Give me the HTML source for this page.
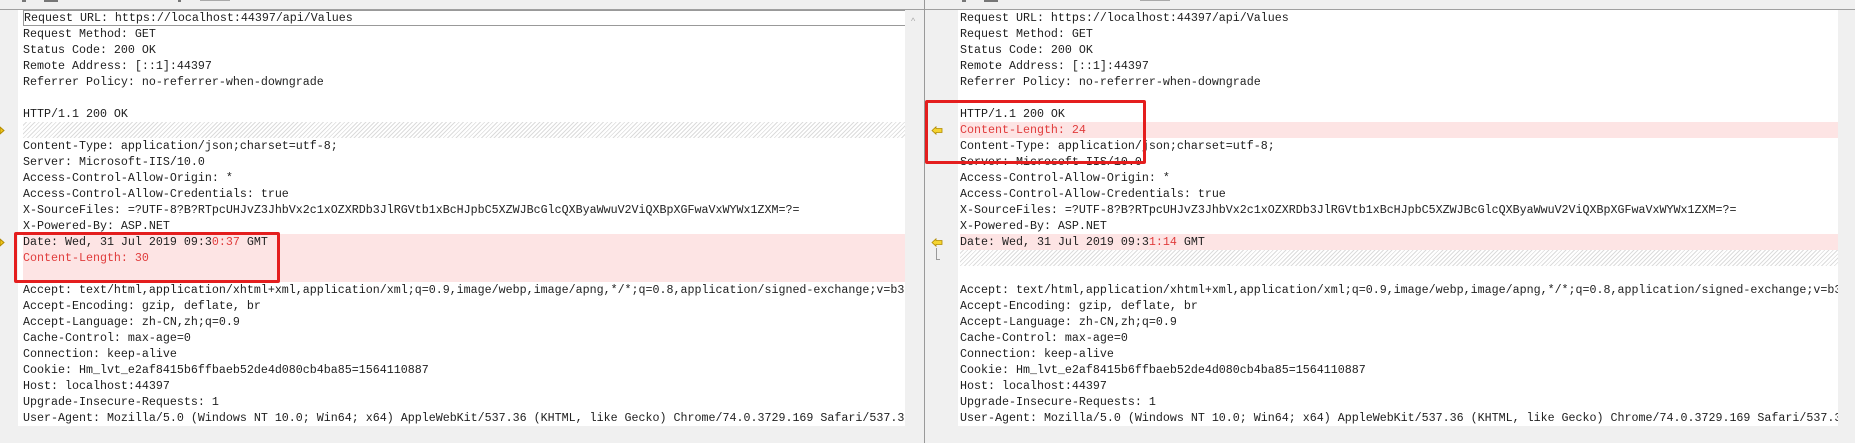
<!DOCTYPE html>
<html><head><meta charset="utf-8"><style>
*{margin:0;padding:0;box-sizing:border-box}
body{width:1855px;height:443px;overflow:hidden;background:#f0f0f0;position:relative;font-family:"Liberation Mono",monospace;font-size:11.67px;color:#1e1e1e}
.pane{position:absolute;top:10px;height:416px;background:#fff;overflow:hidden}
.l{position:absolute;left:0;height:16px;line-height:16px;white-space:pre;width:100%}
.pk{background:#fde4e4}
.r{color:#e03c3c}
.h{background:repeating-linear-gradient(135deg,#fff 0 2px,#dcdcdc 2px 3px)}
.box{position:absolute;border:3px solid #e41e1e;border-radius:2px}
.arr{position:absolute;width:12px;height:9px}
.top{position:absolute;top:0;height:2px;background:#777}
</style></head><body>
<div style="position:absolute;left:0;top:9px;width:1855px;height:1px;background:#a0a0a0"></div>
<div class="top" style="left:22px;width:4px"></div>
<div class="top" style="left:44px;width:14px"></div>
<div class="top" style="left:178px;width:3px"></div>
<div class="top" style="left:200px;width:30px;background:#aaa;height:1px"></div>
<div class="top" style="left:962px;width:4px"></div>
<div class="top" style="left:984px;width:14px"></div>
<div class="top" style="left:1140px;width:30px;background:#aaa;height:1px"></div>

<div style="position:absolute;left:0;top:10px;width:18px;height:416px;background:#f0f0f0"></div>
<div class="pane" style="left:18px;width:887px;">
<div style="position:relative;left:5px;width:882px;height:416px">
<div class="l" style="top:0;border:1px solid #999;border-right:none;height:16px;width:882px;line-height:14px">Request URL: https://localhost:44397/api/Values</div>
<div class="l" style="top:16px">Request Method: GET</div>
<div class="l" style="top:32px">Status Code: 200 OK</div>
<div class="l" style="top:48px">Remote Address: [::1]:44397</div>
<div class="l" style="top:64px">Referrer Policy: no-referrer-when-downgrade</div>
<div class="l" style="top:96px">HTTP/1.1 200 OK</div>
<div class="l h" style="top:112px"></div>
<div class="l" style="top:128px">Content-Type: application/json;charset=utf-8;</div>
<div class="l" style="top:144px">Server: Microsoft-IIS/10.0</div>
<div class="l" style="top:160px">Access-Control-Allow-Origin: *</div>
<div class="l" style="top:176px">Access-Control-Allow-Credentials: true</div>
<div class="l" style="top:192px">X-SourceFiles: =?UTF-8?B?RTpcUHJvZ3JhbVx2c1xOZXRDb3JlRGVtb1xBcHJpbC5XZWJBcGlcQXByaWwuV2ViQXBpXGFwaVxWYWx1ZXM=?=</div>
<div class="l" style="top:208px">X-Powered-By: ASP.NET</div>
<div class="l pk" style="top:224px">Date: Wed, 31 Jul 2019 09:3<span class="r">0:37</span> GMT</div>
<div class="l pk r" style="top:240px">Content-Length: 30</div>
<div class="l pk" style="top:256px"></div>
<div class="l" style="top:272px">Accept: text/html,application/xhtml+xml,application/xml;q=0.9,image/webp,image/apng,*/*;q=0.8,application/signed-exchange;v=b3</div>
<div class="l" style="top:288px">Accept-Encoding: gzip, deflate, br</div>
<div class="l" style="top:304px">Accept-Language: zh-CN,zh;q=0.9</div>
<div class="l" style="top:320px">Cache-Control: max-age=0</div>
<div class="l" style="top:336px">Connection: keep-alive</div>
<div class="l" style="top:352px">Cookie: Hm_lvt_e2af8415b6ffbaeb52de4d080cb4ba85=1564110887</div>
<div class="l" style="top:368px">Host: localhost:44397</div>
<div class="l" style="top:384px">Upgrade-Insecure-Requests: 1</div>
<div class="l" style="top:400px">User-Agent: Mozilla/5.0 (Windows NT 10.0; Win64; x64) AppleWebKit/537.36 (KHTML, like Gecko) Chrome/74.0.3729.169 Safari/537.36</div>
</div></div>
<svg class="arr" style="left:0;top:126px" viewBox="0 0 12 9"><path d="M0 1 L4 4.5 L0 8 Z" fill="#f0c419" stroke="#b08a00" stroke-width="1"/></svg>
<svg class="arr" style="left:0;top:238px" viewBox="0 0 12 9"><path d="M0 1 L4 4.5 L0 8 Z" fill="#f0c419" stroke="#b08a00" stroke-width="1"/></svg>
<div class="box" style="left:14px;top:232px;width:266px;height:51px"></div>
<div style="position:absolute;left:905px;top:10px;width:19px;height:433px;background:#f0f0f0"></div>
<div style="position:absolute;left:911px;top:16px;font-size:9px;color:#aaa;font-family:'Liberation Sans',sans-serif">^</div>
<div style="position:absolute;left:924px;top:0;width:1px;height:443px;background:#999"></div>

<div style="position:absolute;left:925px;top:10px;width:33px;height:416px;background:#f0f0f0"></div>
<div class="pane" style="left:958px;width:880px;">
<div style="position:relative;left:2px;width:878px;height:416px">
<div class="l" style="top:0">Request URL: https://localhost:44397/api/Values</div>
<div class="l" style="top:16px">Request Method: GET</div>
<div class="l" style="top:32px">Status Code: 200 OK</div>
<div class="l" style="top:48px">Remote Address: [::1]:44397</div>
<div class="l" style="top:64px">Referrer Policy: no-referrer-when-downgrade</div>
<div class="l" style="top:96px">HTTP/1.1 200 OK</div>
<div class="l pk r" style="top:112px">Content-Length: 24</div>
<div class="l" style="top:128px">Content-Type: application/json;charset=utf-8;</div>
<div class="l" style="top:144px">Server: Microsoft-IIS/10.0</div>
<div class="l" style="top:160px">Access-Control-Allow-Origin: *</div>
<div class="l" style="top:176px">Access-Control-Allow-Credentials: true</div>
<div class="l" style="top:192px">X-SourceFiles: =?UTF-8?B?RTpcUHJvZ3JhbVx2c1xOZXRDb3JlRGVtb1xBcHJpbC5XZWJBcGlcQXByaWwuV2ViQXBpXGFwaVxWYWx1ZXM=?=</div>
<div class="l" style="top:208px">X-Powered-By: ASP.NET</div>
<div class="l pk" style="top:224px">Date: Wed, 31 Jul 2019 09:3<span class="r">1:14</span> GMT</div>
<div class="l h" style="top:240px"></div>
<div class="l" style="top:272px">Accept: text/html,application/xhtml+xml,application/xml;q=0.9,image/webp,image/apng,*/*;q=0.8,application/signed-exchange;v=b3</div>
<div class="l" style="top:288px">Accept-Encoding: gzip, deflate, br</div>
<div class="l" style="top:304px">Accept-Language: zh-CN,zh;q=0.9</div>
<div class="l" style="top:320px">Cache-Control: max-age=0</div>
<div class="l" style="top:336px">Connection: keep-alive</div>
<div class="l" style="top:352px">Cookie: Hm_lvt_e2af8415b6ffbaeb52de4d080cb4ba85=1564110887</div>
<div class="l" style="top:368px">Host: localhost:44397</div>
<div class="l" style="top:384px">Upgrade-Insecure-Requests: 1</div>
<div class="l" style="top:400px">User-Agent: Mozilla/5.0 (Windows NT 10.0; Win64; x64) AppleWebKit/537.36 (KHTML, like Gecko) Chrome/74.0.3729.169 Safari/537.36</div>
</div></div>
<svg class="arr" style="left:931px;top:126px" viewBox="0 0 12 9"><path d="M1 4.5 L5 0.8 V2.5 H11 V6.5 H5 V8.2 Z" fill="#f5d430" stroke="#b08a00" stroke-width="0.8"/></svg>
<svg class="arr" style="left:931px;top:238px" viewBox="0 0 12 9"><path d="M1 4.5 L5 0.8 V2.5 H11 V6.5 H5 V8.2 Z" fill="#f5d430" stroke="#b08a00" stroke-width="0.8"/></svg>
<div style="position:absolute;left:936px;top:248px;width:1px;height:12px;background:#999"></div>
<div style="position:absolute;left:936px;top:259px;width:4px;height:1px;background:#999"></div>
<div class="box" style="left:925px;top:100px;width:221px;height:64px"></div>
<div style="position:absolute;left:1838px;top:10px;width:17px;height:433px;background:#f0f0f0"></div>
</body></html>
